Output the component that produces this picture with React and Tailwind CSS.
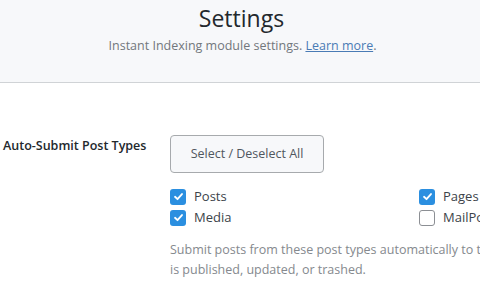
import React from "react";

function Box({ checked }) {
  return checked ? (
    <span className="flex h-[16px] w-[16px] shrink-0 items-center justify-center rounded-[3px] bg-[#2b8fe0]">
      <svg width="11" height="11" viewBox="0 0 12 12">
        <path d="M2.2 6.3 L4.9 8.9 L9.8 3.3" fill="none" stroke="#fff" strokeWidth="2" strokeLinecap="round" strokeLinejoin="round" />
      </svg>
    </span>
  ) : (
    <span className="h-[16px] w-[16px] shrink-0 rounded-[3px] border border-[#8c8f94] bg-white" />
  );
}

function Item({ checked, label }) {
  return (
    <div className="flex h-[21px] items-center gap-[8px] whitespace-nowrap text-[13px] text-[#3c434a]">
      <Box checked={checked} />
      <span>{label}</span>
    </div>
  );
}

export default function App() {
  return (
    <div className="h-[287px] w-[480px] overflow-hidden bg-white" style={{ fontFamily: '"Open Sans", "Noto Sans", sans-serif' }}>
      <div className="flex h-[83px] flex-col items-center border-b border-[#d0d3d6] bg-[#f7f8fa] pt-[1px]">
        <h1 className="pl-[3px] text-[23px] leading-[34px] text-[#23282d]">Settings</h1>
        <p className="mt-[1px] pl-[5px] text-[12.5px] leading-[20px] text-[#72777c]">
          Instant Indexing module settings. <a className="text-[#4a7bb5] underline">Learn more</a>.
        </p>
      </div>
      <div className="flex pt-[52px]">
        <div className="w-[170px] shrink-0 pl-[3px] pt-[1px] text-[12.5px] font-semibold leading-[20px] text-[#23282d] whitespace-nowrap">
          Auto-Submit Post Types
        </div>
        <div className="flex min-w-0 flex-col">
          <button className="h-[38px] w-[154px] rounded-[4px] border border-[#a7aaad] bg-[#f7f8fa] text-[12.5px] text-[#50575e]">
            Select / Deselect All
          </button>
          <div className="mt-[13px] grid grid-cols-[249px_100px]">
            <Item checked label="Posts" />
            <Item checked label="Pages" />
            <Item checked label="Media" />
            <Item checked={false} label="MailPoet Pages" />
          </div>
          <p className="mt-[12px] w-[428px] text-[12.5px] leading-[20px] text-[#85898e]">
            Submit posts from these post types automatically to the API when a post is published, updated, or trashed.
          </p>
        </div>
      </div>
    </div>
  );
}
